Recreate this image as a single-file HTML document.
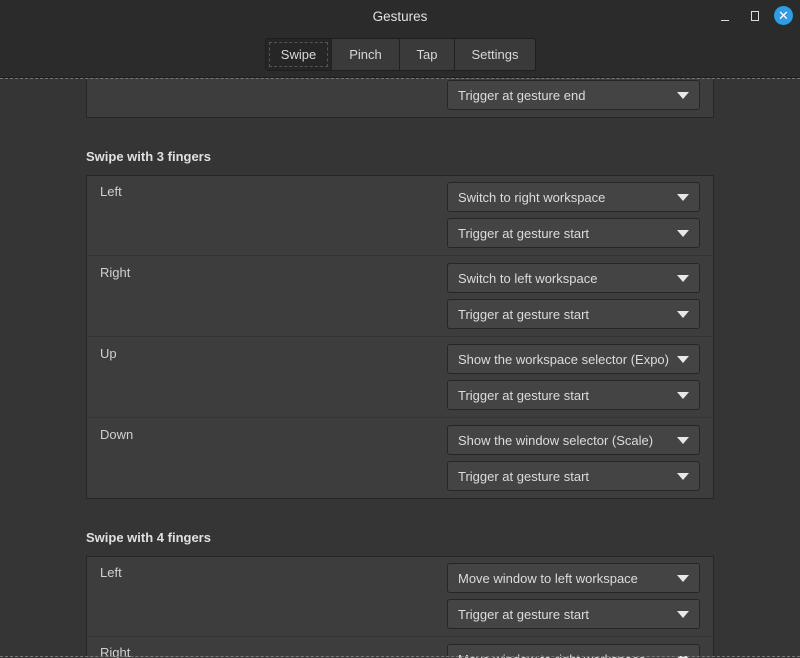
<!DOCTYPE html>
<html><head><style>
*{margin:0;padding:0;box-sizing:border-box}
html,body{width:800px;height:658px;overflow:hidden}
body{background:#353535;font-family:"Liberation Sans","DejaVu Sans",sans-serif;font-size:13px;color:#dadada;position:relative}
.hdr{position:absolute;left:0;top:0;width:800px;height:78px;background:#2b2b2b;border-bottom:1px solid #1e1e1e}
.title{position:absolute;top:9px;width:800px;text-align:center;font-size:13.5px;color:#e0e0e0}
.tabs{position:absolute;left:265px;top:38px;height:33px;display:flex;border:1px solid #1e1e1e;border-radius:3px;overflow:hidden}
.tab{background:#3a3a3a;border-left:1px solid #222;text-align:center;line-height:31px;color:#d8d8d8}
.tab.a{background:#262626;border-left:none;outline:1px dashed #555;outline-offset:-4px}
.dash{position:absolute;left:0;width:800px;border-top:1px dashed #777}
.panel{position:absolute;left:86px;width:628px;background:#3d3d3d;border:1px solid #262626}
.combo{position:absolute;left:447px;width:253px;height:30px;background:#444;border:1px solid #262626;border-radius:3px;padding-left:10px;line-height:29px;color:#dcdcdc}
.combo:after{content:"";position:absolute;right:10px;top:11px;border-left:6px solid transparent;border-right:6px solid transparent;border-top:7px solid #e8e8e8}
.lbl{position:absolute;left:100px;color:#d0d0d0}
.h{position:absolute;left:86px;font-weight:bold;color:#e0e0e0}
.sep{position:absolute;left:87px;width:626px;border-top:1px solid #343434}
</style></head><body>
<div class="panel" style="top:70px;height:48px"></div>
<div class="combo" style="top:80px">Trigger at gesture end</div>
<div class="h" style="top:149px">Swipe with 3 fingers</div>
<div class="panel" style="top:175px;height:324px"></div>
<div class="sep" style="top:255px"></div><div class="sep" style="top:336px"></div><div class="sep" style="top:417px"></div>
<div class="lbl" style="top:184px">Left</div>
<div class="combo" style="top:182px">Switch to right workspace</div>
<div class="combo" style="top:218px">Trigger at gesture start</div>
<div class="lbl" style="top:265px">Right</div>
<div class="combo" style="top:263px">Switch to left workspace</div>
<div class="combo" style="top:299px">Trigger at gesture start</div>
<div class="lbl" style="top:346px">Up</div>
<div class="combo" style="top:344px">Show the workspace selector (Expo)</div>
<div class="combo" style="top:380px">Trigger at gesture start</div>
<div class="lbl" style="top:427px">Down</div>
<div class="combo" style="top:425px">Show the window selector (Scale)</div>
<div class="combo" style="top:461px">Trigger at gesture start</div>
<div class="h" style="top:530px">Swipe with 4 fingers</div>
<div class="panel" style="top:556px;height:110px"></div>
<div class="sep" style="top:636px"></div>
<div class="lbl" style="top:565px">Left</div>
<div class="combo" style="top:563px">Move window to left workspace</div>
<div class="combo" style="top:599px">Trigger at gesture start</div>
<div class="lbl" style="top:645px">Right</div>
<div class="combo" style="top:644px">Move window to right workspace</div>
<div class="dash" style="top:656px"></div>
<div class="hdr">
<div class="title">Gestures</div>
<div style="position:absolute;left:721px;top:20px;width:8px;border-top:1px solid #ddd"></div>
<div style="position:absolute;left:751px;top:11px;width:8px;height:10px;border:1.5px solid #ddd"></div>
<div style="position:absolute;left:774px;top:6px;width:19px;height:19px;border-radius:50%;background:#2e9ce6;color:#fff;font-weight:bold;font-size:13px;text-align:center;line-height:19px">✕</div>
<div class="tabs">
<div class="tab a" style="width:65px">Swipe</div>
<div class="tab" style="width:68px">Pinch</div>
<div class="tab" style="width:55px">Tap</div>
<div class="tab" style="width:81px">Settings</div>
</div>
</div>
<div class="dash" style="top:78px"></div>
</body></html>
